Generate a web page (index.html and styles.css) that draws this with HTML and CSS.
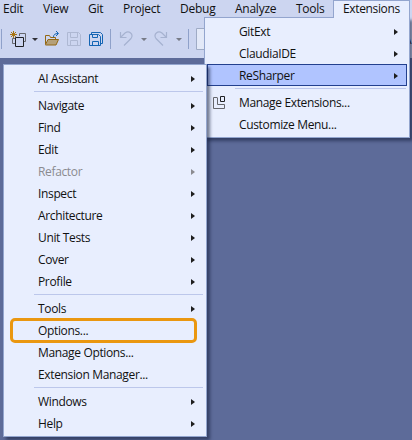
FILE: index.html
```
<!DOCTYPE html>
<html lang="en">
<head>
<meta charset="utf-8">
<title>Extensions menu</title>
<link rel="stylesheet" href="styles.css">
</head>
<body>
<div class="window">
  <header class="shell">
    <nav class="menubar">
      <span class="edit">Edit</span><span class="view">View</span><span class="git">Git</span><span class="project">Project</span><span class="debug">Debug</span><span class="analyze">Analyze</span><span class="tools">Tools</span>
    </nav>
    <div class="toolbar">
      <svg width="412" height="41" viewBox="0 17 412 41" fill="none">
        <path d="M1.500 29v20M110.500 29v20M188.500 29v20" stroke="#8fa1ca"/>
        <path d="M13.500 31v7M10 34.500h7M11 32l5 5M16 32l-5 5" stroke="#a87513"/>
        <path d="M19.500 36v-2.500h6v8h-2M15 38.500h-2.500v5h3" stroke="#66686f"/>
        <path d="M15.500 37.500h8v9h-8z" stroke="#202124"/>
        <path d="M32 38h6l-3 3z" fill="#303138"/>
        <path d="M45.500 44v-8.500h4l1 2h5v2" stroke="#936814"/>
        <path d="M45.500 44.500l2.500-5h10.500l-2.500 5.500h-10.500z" fill="#b5a078" stroke="#936814"/>
        <path d="M53.500 37q0-3.500 4.500-3.500M56 31l2.500 2.500L56 36" stroke="#1465b4"/>
        <path d="M67.500 32.500h11l2 2v11h-13zM70.500 32.500v5h7v-5M70.500 45.500v-5h7v5" stroke="#aeb8d3"/>
        <path d="M89.500 34.500h9l2 2v9h-11zM92.500 34.500v3h5v-3M92.500 45.500v-4h6v4M91.500 34v-1.500h9l2 2v9H101" stroke="#1465b4"/>
        <g stroke="#a6b2d0" stroke-width="1.200"><path d="M120.500 32v5.500h6M120.500 37.500l4.500-4.500c4-3 9 1 6 5.500L124 45.500"/><path d="M166.500 32v5.500h-6M166.500 37.500l-4.500-4.500c-4-3-9 1-6 5.500l7 7"/></g>
        <path d="M141 38h6l-3 3zM176 38h6l-3 3z" fill="#777b87"/>
        <path d="M210 28.500h-13.500v21H210" fill="#e3e9f8" stroke="#9fabc5"/>
      </svg>
      <span class="clipped">A</span>
    </div>
  </header>

  <section class="menu extensions">
    <div class="row sub"><span>GitExt</span></div>
    <div class="row sub"><span>ClaudiaIDE</span></div>
    <div class="row sub selected"><span>ReSharper</span></div>
    <hr>
    <div class="row"><svg class="icon" width="14" height="14" viewBox="0 0 14 14" fill="none"><path d="M5 1.500H1.500v11h11v-4h-7v-7" stroke="#65666c"/><path d="M8.500 .500h4v5h-4z" stroke="#202124"/></svg><span>Manage Extensions...</span></div>
    <div class="row"><span>Customize Menu...</span></div>
  </section>
  <div class="tab"><span>Extensions</span></div>

  <section class="menu resharper">
    <div class="row sub"><span>AI Assistant</span></div>
    <hr>
    <div class="row sub"><span>Navigate</span></div>
    <div class="row sub"><span>Find</span></div>
    <div class="row sub"><span>Edit</span></div>
    <div class="row sub disabled"><span>Refactor</span></div>
    <div class="row sub"><span>Inspect</span></div>
    <div class="row sub"><span>Architecture</span></div>
    <div class="row sub"><span>Unit Tests</span></div>
    <div class="row sub"><span>Cover</span></div>
    <div class="row sub"><span>Profile</span></div>
    <hr>
    <div class="row sub"><span>Tools</span></div>
    <div class="row marked"><span>Options...</span></div>
    <div class="row"><span>Manage Options...</span></div>
    <div class="row"><span>Extension Manager...</span></div>
    <hr>
    <div class="row sub"><span>Windows</span></div>
    <div class="row sub"><span>Help</span></div>
  </section>
</div>
</body>
</html>
```
FILE: styles.css
```
*, *::before { box-sizing: border-box; }
body { margin: 0; font: 12px/18px "Open Sans", "Noto Sans", sans-serif; color: #111; }
.window { position: relative; width: 412px; height: 440px; overflow: hidden; background: #5d6b99; }
.shell { height: 58px; background: #ccd5f0; }
.menubar { display: flex; height: 17px; padding-left: 3px; white-space: nowrap; letter-spacing: -0.25px; }
.menubar span { flex: none; }
.edit { width: 40px; }
.view { width: 45px; }
.git { width: 35px; }
.project { width: 57px; }
.debug { width: 55px; }
.analyze { width: 61px; }
.toolbar { position: relative; height: 41px; }
.toolbar svg { display: block; }
.clipped { position: absolute; left: 404px; top: 14px; }

.menu { position: absolute; background: #e8eefe; border: 1px solid #93a5ce; box-shadow: 3px 3px 3px rgba(20, 30, 60, .55); }
.extensions { left: 204px; top: 17px; width: 206px; height: 121px; padding: 2px 2px 0; }
.resharper { left: 3px; top: 64px; width: 204px; height: 373px; padding: 3px 2px 0; }
.tab { position: absolute; left: 333px; top: 0; width: 77px; height: 18px; padding-left: 9px; background: #e8eefe; border: 1px solid #93a5ce; border-bottom: 0; line-height: 16px; letter-spacing: -0.35px; }
.row { position: relative; display: flex; align-items: center; height: 22px; padding-left: 32px; white-space: nowrap; letter-spacing: -0.35px; }
.extensions .sub { padding-top: 2px; }
.sub::after { content: ""; box-sizing: content-box; margin-left: auto; margin-right: 9px; border: solid transparent; border-width: 3.500px 0 3.500px 4px; border-left-color: #1e1e1e; }
.disabled { color: #8b8b90; }
.disabled::after { border-left-color: #8b8b90; }
.selected { background: #b0c4ff; outline: 1px solid #23408e; outline-offset: -1px; }
.icon { position: absolute; left: 5px; top: 4px; }
.menu hr { height: 1px; margin: 1px 1px 3px 28px; border: 0; background: #bcc7eb; }
.extensions hr { margin: 2px 1px 3px 28px; }
.marked::before { content: ""; position: absolute; left: 4px; top: -2px; width: 187px; height: 25px; border: 3px solid #ea9710; border-radius: 5px; }
```
